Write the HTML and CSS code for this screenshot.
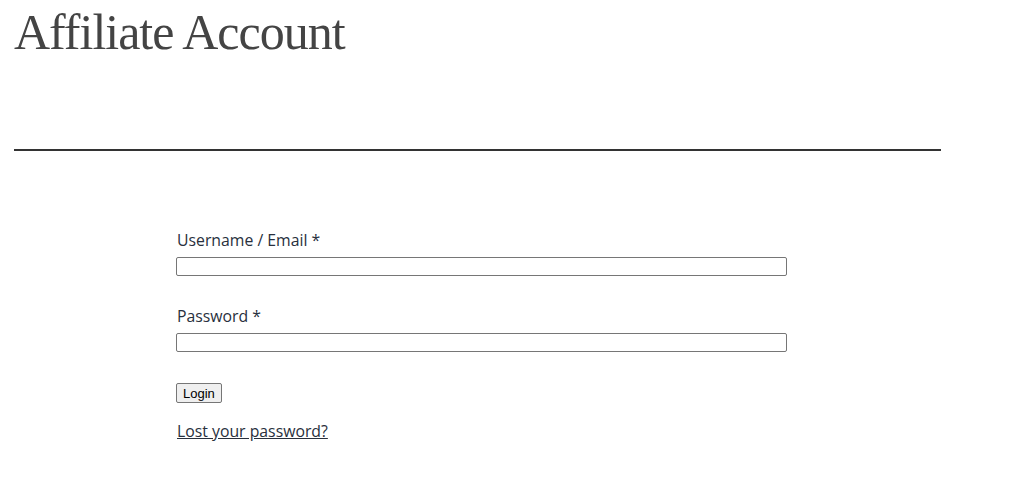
FILE: index.html
```html
<!DOCTYPE html>
<html lang="en">
<head>
    <meta charset="UTF-8">
    <meta name="viewport" content="width=device-width, initial-scale=1.0">
    <title>Affiliate Account</title>
    <link rel="stylesheet" href="styles.css">
</head>
<body>
    <div class="page">
        <h1 class="page-title">Affiliate Account</h1>
        <hr class="divider">

        <form class="login-form" id="loginForm">
            <div class="field">
                <label for="username">Username / Email *</label>
                <input type="text" id="username" required>
            </div>
            <div class="field">
                <label for="password">Password *</label>
                <input type="password" id="password" required>
            </div>
            <button type="submit">Login</button>
            <p class="lost-password"><a href="#">Lost your password?</a></p>
        </form>
    </div>
</body>
</html>
```

FILE: styles.css
```css
body {
    margin: 0;
    background: #fff;
    color: #28303d;
    font-family: "Open Sans", "Noto Sans", sans-serif;
}
.page {
    max-width: 927px;
    padding: 0 14px;
}
.page-title {
    margin: 2px 0 0;
    font-family: "Liberation Serif", "DejaVu Serif", serif;
    font-weight: normal;
    font-size: 50px;
    line-height: 60px;
    letter-spacing: -1px;
    color: #444;
}
.divider {
    margin: 87px 0 0;
    border: none;
    height: 2px;
    background: #333;
}
.login-form {
    margin: 77px 0 0 162px;
    width: 610px;
}
.field {
    margin-bottom: 28px;
}
.field:last-of-type {
    margin-bottom: 31px;
}
label {
    display: block;
    font-size: 15.8px;
    line-height: 24px;
    margin-bottom: 5px;
    padding-left: 1px;
}
input[type="text"], input[type="password"] {
    display: block;
    box-sizing: border-box;
    width: 611px;
    height: 19px;
    margin: 0;
    padding: 0 4px;
    border: 1px solid #767676;
    border-radius: 2px;
    background: #fff;
}
button {
    display: block;
    height: 20px;
    margin: 0;
    padding: 0 6px;
    font-family: "Liberation Sans", Arial, sans-serif;
    font-size: 13px;
    color: #000;
    background: #efefef;
    border: 1px solid #767676;
    border-radius: 2px;
    cursor: pointer;
}
.lost-password {
    margin: 16px 0 0;
    font-size: 15.8px;
    line-height: 24px;
    padding-left: 1px;
}
.lost-password a {
    color: #28303d;
    text-decoration: underline;
}
```
